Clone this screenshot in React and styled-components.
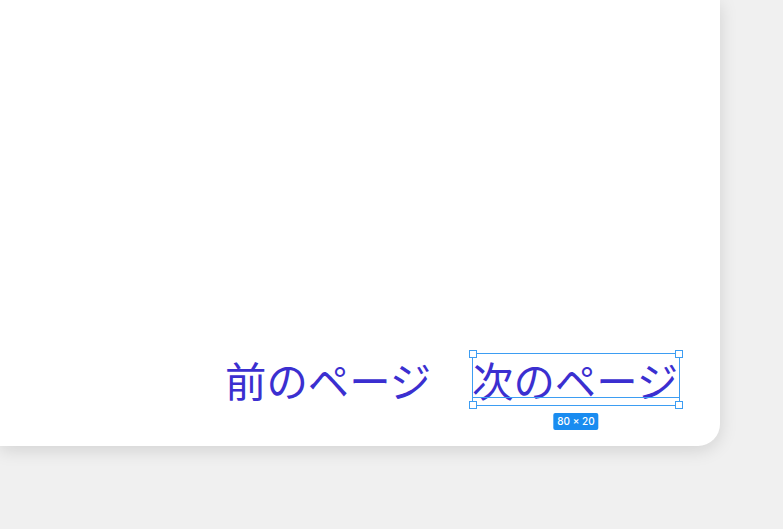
import React from "react";
import styled, { createGlobalStyle } from "styled-components";

const Global = createGlobalStyle`
  html, body { margin: 0; padding: 0; background: #f0f0f0; }
  body { width: 783px; height: 529px; overflow: hidden; font-family: "Noto Sans CJK JP", "Noto Sans", sans-serif; }
`;

const Stage = styled.div`
  width: 783px;
  height: 529px;
  background: #f0f0f0;
`;

const Card = styled.div`
  width: 720px;
  height: 446px;
  box-sizing: border-box;
  background: #ffffff;
  border-bottom-right-radius: 22px;
  box-shadow: 0 4px 18px rgba(0, 0, 0, 0.13);
  display: flex;
  flex-direction: column;
  justify-content: flex-end;
  align-items: flex-end;
  padding: 0 40px 40px 0;
`;

const Pager = styled.div`
  display: flex;
  gap: 39px;
`;

const PageLink = styled.a`
  position: relative;
  display: block;
  width: 208px;
  height: 53px;
  font-size: 41.4px;
  line-height: 52px;
  color: #3b2fd0;
  text-decoration: none;
  white-space: nowrap;
  cursor: pointer;
`;

const Selection = styled.div`
  position: absolute;
  inset: 0;
  border: 1px solid #3d9df2;
  pointer-events: none;
  &::after {
    content: "";
    position: absolute;
    left: 0;
    right: 0;
    top: 43px;
    height: 1px;
    background: #3d9df2;
  }
`;

const Handle = styled.span`
  position: absolute;
  width: 6px;
  height: 6px;
  background: #fff;
  border: 1px solid #3d9df2;
  ${(p) => (p.$top ? "top: -4px;" : "bottom: -4px;")}
  ${(p) => (p.$left ? "left: -4px;" : "right: -4px;")}
`;

const SizeBadge = styled.div`
  position: absolute;
  top: 59px;
  left: 50%;
  transform: translateX(-50%);
  background: #1a8cf0;
  color: #fff;
  font-family: Inter, "Noto Sans", sans-serif;
  font-size: 10px;
  font-weight: 500;
  line-height: 17px;
  padding: 0 4px;
  border-radius: 2px;
  white-space: nowrap;
`;

export default function App() {
  return (
    <Stage>
      <Global />
      <Card>
        <Pager>
          <PageLink>前のページ</PageLink>
          <PageLink>
            次のページ
            <Selection>
              <Handle $top $left />
              <Handle $top />
              <Handle $left />
              <Handle />
              <SizeBadge>80 × 20</SizeBadge>
            </Selection>
          </PageLink>
        </Pager>
      </Card>
    </Stage>
  );
}
